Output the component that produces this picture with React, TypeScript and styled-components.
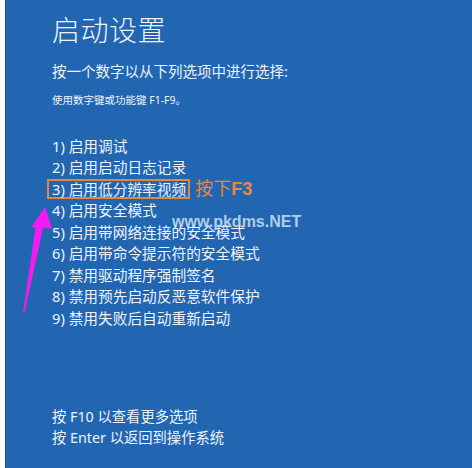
import styled, { createGlobalStyle } from "styled-components"

const GlobalStyle = createGlobalStyle`
  html, body {
    margin: 0;
    padding: 0;
    background: #ffffff;
  }
  #root {
    width: 472px;
    height: 468px;
  }
`

const options = [
  "1) 启用调试",
  "2) 启用启动日志记录",
  "3) 启用低分辨率视频",
  "4) 启用安全模式",
  "5) 启用带网络连接的安全模式",
  "6) 启用带命令提示符的安全模式",
  "7) 禁用驱动程序强制签名",
  "8) 禁用预先启动反恶意软件保护",
  "9) 禁用失败后自动重新启动",
]

export default function App() {
  return (
    <>
      <GlobalStyle />
      <Page>
        <Strip />
        <Screen>
          <Title>启动设置</Title>
          <Subtitle>按一个数字以从下列选项中进行选择:</Subtitle>
          <Hint>使用数字键或功能键 F1-F9。</Hint>
          <OptionList>
            {options.map((text, i) => (
              <Row key={text}>
                <Option $marked={i === 2}>{text}</Option>
                {i === 2 && (
                  <Note>
                    按下<b>F3</b>
                  </Note>
                )}
              </Row>
            ))}
          </OptionList>
          <Footer>
            <FooterLine>按 F10 以查看更多选项</FooterLine>
            <FooterLine>按 Enter 以返回到操作系统</FooterLine>
          </Footer>
          <Watermark>www.pkdms.NET</Watermark>
          <Arrow width="36" height="120" viewBox="0 0 36 120">
            <polygon
              points="25,7 11.5,27 15.5,27.5 3,113 4.5,113 23,28 32,28.5"
              fill="#f21cf0"
            />
          </Arrow>
        </Screen>
      </Page>
    </>
  )
}

const Page = styled.div`
  display: flex;
  width: 472px;
  height: 468px;
  overflow: hidden;
  font-family: "Noto Sans", "Noto Sans CJK SC", sans-serif;
`

const Strip = styled.div`
  width: 5px;
  flex-shrink: 0;
  background: #ffffff;
  border-right: 1px solid #1a4f8c;
`

const Screen = styled.div`
  position: relative;
  flex: 1;
  display: flex;
  flex-direction: column;
  padding: 12px 0 0 46px;
  background: #2266b2;
  color: #eef3fa;
`

const Title = styled.div`
  font-size: 28px;
  line-height: 36px;
  font-weight: 300;
  letter-spacing: 0.5px;
`

const Subtitle = styled.div`
  margin-top: 13px;
  font-size: 14.5px;
  line-height: 20px;
`

const Hint = styled.div`
  margin-top: 11px;
  font-size: 10.5px;
  line-height: 16px;
`

const OptionList = styled.div`
  margin-top: 27px;
  display: flex;
  flex-direction: column;
`

const Row = styled.div`
  display: flex;
  align-items: center;
  height: 21.5px;
`

const Option = styled.span<{ $marked?: boolean }>`
  font-size: 14.7px;
  line-height: 16px;
  white-space: nowrap;
  ${(p) =>
    p.$marked &&
    `
    border: 2px solid #e0883c;
    padding: 0 2px 0 3px;
    margin-left: -5px;
  `}
`

const Note = styled.span`
  margin-left: 5px;
  font-size: 18px;
  line-height: 20px;
  color: #e9873a;
  white-space: nowrap;

  b {
    font-family: "Liberation Sans", "Noto Sans", sans-serif;
    font-weight: 700;
  }
`

const Footer = styled.div`
  margin-top: 77px;
  display: flex;
  flex-direction: column;
`

const FooterLine = styled.div`
  font-size: 14.3px;
  line-height: 21px;
`

const Watermark = styled.div`
  position: absolute;
  left: 166px;
  top: 212px;
  font-family: "Liberation Sans", sans-serif;
  font-size: 16px;
  font-weight: 700;
  line-height: 20px;
  color: rgba(214, 228, 246, 0.82);
  white-space: nowrap;
`

const Arrow = styled.svg`
  position: absolute;
  left: 14px;
  top: 200px;
`
